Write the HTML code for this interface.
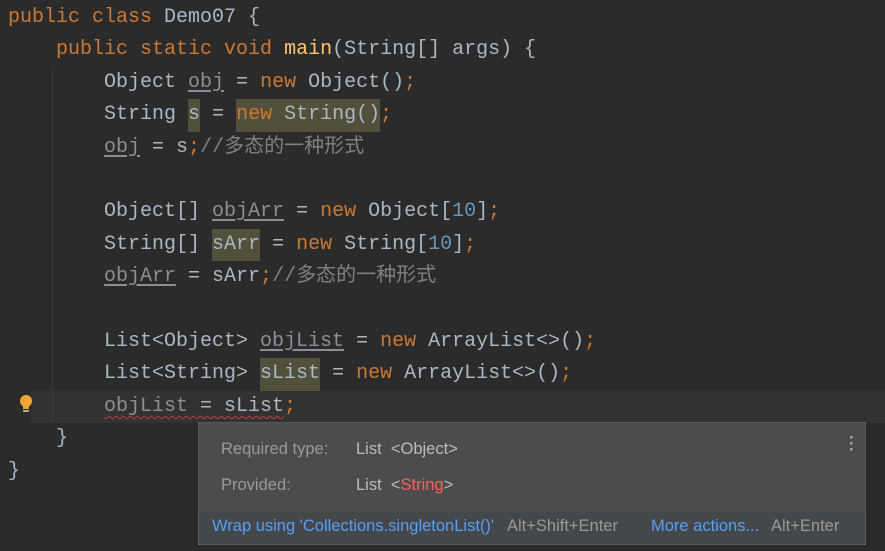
<!DOCTYPE html>
<html><head><meta charset="utf-8"><style>
body{margin:0;width:885px;height:551px;background:#2b2b2b;overflow:hidden;position:relative;font-family:"Liberation Mono","Noto Sans CJK SC",monospace;font-size:20px;color:#a9b7c6}
.l{position:absolute;left:8px;height:32.4px;line-height:32.4px;white-space:pre}
.k{color:#cc7832}.m{color:#ffc66d}.n{color:#6897bb}.c{color:#808080;font-family:"Liberation Mono","Noto Sans CJK SC",monospace}
.u{color:#8a8f96;text-decoration:underline;text-underline-offset:3px;text-decoration-color:#8a8f96}
.h{background:#52503a;display:inline-block;height:32.4px}
.w{text-decoration:underline wavy #bc3f3c;text-underline-offset:4px;text-decoration-thickness:1px}
#cur{position:absolute;left:31px;top:391px;width:854px;height:32px;background:#323232}
#guide{position:absolute;left:52px;top:66px;width:1px;height:356px;background:#393939}
#pop{position:absolute;left:198px;top:422px;width:666px;height:121px;background:#4b4d4d;border:1px solid #5a5c5c;font-family:"Liberation Sans","DejaVu Sans",sans-serif;font-size:16.5px;color:#bbbbbb}
#pop .r{position:absolute;white-space:pre}
#bot{position:absolute;left:0;bottom:0;width:666px;height:33px;background:#45484a}
</style></head><body>
<div id="cur"></div><div id="guide"></div>
<div class="l" style="top:2px"><span class="k">public class </span>Demo07 {</div>
<div class="l" style="top:34.4px">    <span class="k">public static void </span><span class="m">main</span>(String[] args) {</div>
<div class="l" style="top:66.8px">        Object <span class="u">obj</span> = <span class="k">new </span>Object()<span class="k">;</span></div>
<div class="l" style="top:99.2px">        String <span class="h">s</span> = <span class="h"><span class="k">new </span>String()</span><span class="k">;</span></div>
<div class="l" style="top:131.6px">        <span class="u">obj</span> = s<span class="k">;</span><span class="c">//多态的一种形式</span></div>
<div class="l" style="top:196.4px">        Object[] <span class="u">objArr</span> = <span class="k">new </span>Object[<span class="n">10</span>]<span class="k">;</span></div>
<div class="l" style="top:228.8px">        String[] <span class="h">sArr</span> = <span class="k">new </span>String[<span class="n">10</span>]<span class="k">;</span></div>
<div class="l" style="top:261.2px">        <span class="u">objArr</span> = sArr<span class="k">;</span><span class="c">//多态的一种形式</span></div>
<div class="l" style="top:326px">        List&lt;Object&gt; <span class="u">objList</span> = <span class="k">new </span>ArrayList&lt;&gt;()<span class="k">;</span></div>
<div class="l" style="top:358.4px">        List&lt;String&gt; <span class="h">sList</span> = <span class="k">new </span>ArrayList&lt;&gt;()<span class="k">;</span></div>
<div class="l" style="top:391px">        <span class="w"><span style="color:#8a8f96">objList</span> = sList</span><span class="k">;</span></div>
<div class="l" style="top:423.2px">    }</div>
<div class="l" style="top:455.6px">}</div>
<svg style="position:absolute;left:17px;top:394px" width="18" height="22"><circle cx="9" cy="7" r="6" fill="#f0a732"/><rect x="6" y="11" width="6" height="4" fill="#f0a732"/><rect x="6" y="16" width="6" height="2" fill="#aaa"/></svg>
<div id="pop">
<div class="r" style="left:22px;top:17px;color:#999">Required type:</div>
<div class="r" style="left:157px;top:17px">List  &lt;Object&gt;</div>
<div class="r" style="left:22px;top:53px;color:#999">Provided:</div>
<div class="r" style="left:157px;top:53px">List  &lt;<span style="color:#ff5c5c">String</span>&gt;</div>
<div class="r" style="left:650px;top:12px;font-weight:bold;line-height:6px;color:#aaa">·<br>·<br>·</div>
<div id="bot">
<div class="r" style="left:13px;top:6px;color:#589df6">Wrap using 'Collections.singletonList()'</div>
<div class="r" style="left:308px;top:6px;color:#999">Alt+Shift+Enter</div>
<div class="r" style="left:452px;top:6px;color:#589df6">More actions...</div>
<div class="r" style="left:572px;top:6px;color:#999">Alt+Enter</div>
</div>
</div>
</body></html>
